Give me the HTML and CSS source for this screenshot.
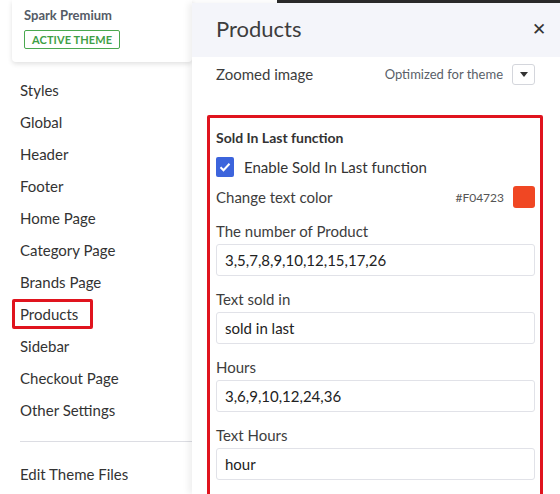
FILE: index.html
```html
<!DOCTYPE html>
<html>
<head>
<meta charset="utf-8">
<link rel="stylesheet" href="styles.css">
</head>
<body>
<div class="page">
  <aside class="sidebar">
    <div class="theme-card">
      <div class="theme-name">Spark Premium</div>
      <span class="badge">ACTIVE THEME</span>
    </div>
    <nav class="nav">
      <a class="nav-item">Styles</a>
      <a class="nav-item">Global</a>
      <a class="nav-item">Header</a>
      <a class="nav-item">Footer</a>
      <a class="nav-item">Home Page</a>
      <a class="nav-item">Category Page</a>
      <a class="nav-item">Brands Page</a>
      <a class="nav-item active">Products</a>
      <a class="nav-item">Sidebar</a>
      <a class="nav-item">Checkout Page</a>
      <a class="nav-item">Other Settings</a>
    </nav>
    <div class="divider"></div>
    <a class="nav-item">Edit Theme Files</a>
  </aside>
  <section class="panel">
    <header class="panel-head">
      <h1 class="panel-title">Products</h1>
      <span class="close">&#x2715;</span>
    </header>
    <div class="panel-body">
      <div class="row">
        <span class="label">Zoomed image</span>
        <div class="row-right">
          <span class="muted">Optimized for theme</span>
          <span class="select"><svg width="8" height="5" viewBox="0 0 8 5"><path d="M0 0h8L4 5z" fill="#333"/></svg></span>
        </div>
      </div>
      <div class="highlight">
        <div class="section-title">Sold In Last function</div>
        <label class="check-row">
          <span class="checkbox"><svg width="12" height="10" viewBox="0 0 12 10"><path d="M1.5 5.2l3 3L10.5 1.8" fill="none" stroke="#fff" stroke-width="2"/></svg></span>
          <span class="check-label">Enable Sold In Last function</span>
        </label>
        <div class="row color-row">
          <span class="label">Change text color</span>
          <div class="row-right">
            <span class="hex">#F04723</span>
            <span class="swatch"></span>
          </div>
        </div>
        <div class="field">
          <div class="label">The number of Product</div>
          <div class="input">3,5,7,8,9,10,12,15,17,26</div>
        </div>
        <div class="field">
          <div class="label">Text sold in</div>
          <div class="input">sold in last</div>
        </div>
        <div class="field">
          <div class="label">Hours</div>
          <div class="input">3,6,9,10,12,24,36</div>
        </div>
        <div class="field">
          <div class="label">Text Hours</div>
          <div class="input">hour</div>
        </div>
      </div>
    </div>
  </section>
</div>
</body>
</html>
```

FILE: styles.css
```css
* { box-sizing: border-box; }
html, body { margin: 0; padding: 0; }
body {
  width: 560px;
  height: 494px;
  overflow: hidden;
  font-family: "Lato", "Source Sans Pro", sans-serif;
  color: #333;
  background: #fff;
}
.page {
  display: flex;
  height: 494px;
  background: linear-gradient(to right, #fff 0, #fff 277px, #2b2b2b 277px) top / 100% 3px no-repeat, #fff;
}
.sidebar {
  width: 192px;
  flex: none;
  padding-left: 12px;
  display: flex;
  flex-direction: column;
}
.theme-card {
  width: 180px;
  height: 62px;
  padding: 7px 0 0 12px;
  border-radius: 0 0 4px 4px;
  box-shadow: 0 2px 5px rgba(0,0,0,0.12);
  background: #fff;
}
.theme-name {
  font-size: 13px;
  font-weight: 700;
  color: #555b66;
  line-height: 16px;
}
.badge {
  display: inline-block;
  margin-top: 7px;
  height: 19px;
  line-height: 17px;
  padding: 0 7px;
  border: 1px solid #4aa84f;
  border-radius: 2px;
  color: #3f9f46;
  font-size: 11px;
  font-weight: 700;
  letter-spacing: 0.1px;
}
.nav {
  margin-top: 12px;
  display: flex;
  flex-direction: column;
}
.nav-item {
  display: block;
  height: 32px;
  line-height: 32px;
  padding-left: 8px;
  font-size: 15px;
  color: #333;
}
.nav-item.active {
  width: 81px;
  height: 30px;
  line-height: 25px;
  margin: 1px 0;
  border: 3px solid #e0141e;
  border-radius: 2px;
  padding-left: 5px;
}
.divider {
  margin: 15px 0 16px 8px;
  height: 1px;
  background: #dcdde3;
}
.panel {
  flex: 1;
  margin-top: 3px;
  display: flex;
  flex-direction: column;
  background: #fff;
  box-shadow: -4px 0 6px rgba(0,0,0,0.06);
}
.panel-head {
  height: 54px;
  flex: none;
  background: #f4f5fa;
  display: flex;
  align-items: center;
  justify-content: space-between;
  padding: 0 14px 4px 24px;
}
.panel-title {
  margin: 0;
  font-size: 22px;
  font-weight: 400;
  color: #3d3d3d;
}
.close {
  font-size: 17px;
  color: #333;
}
.panel-body {
  padding: 5px 0 0 15px;
}
.row {
  display: flex;
  align-items: center;
  justify-content: space-between;
}
.panel-body > .row {
  height: 24px;
  padding: 0 25px 0 9px;
}
.row-right {
  display: flex;
  align-items: center;
  gap: 9px;
}
.label {
  font-size: 15px;
  color: #3d3d3d;
}
.muted {
  font-size: 13px;
  color: #5a5f69;
}
.select {
  width: 23px;
  height: 21px;
  border: 1px solid #d4d6dc;
  border-radius: 3px;
  display: flex;
  align-items: center;
  justify-content: center;
}
.highlight {
  margin-top: 29px;
  width: 336px;
  border: 3px solid #e0141e;
  border-radius: 2px;
  padding: 10px 5px 20px 6px;
}
.section-title {
  font-size: 14px;
  font-weight: 700;
  color: #333;
  line-height: 20px;
}
.check-row {
  display: flex;
  align-items: center;
  gap: 10px;
  margin-top: 9px;
  height: 20px;
}
.checkbox {
  width: 18px;
  height: 20px;
  border-radius: 2px;
  background: #3c64dc;
  display: flex;
  align-items: center;
  justify-content: center;
}
.check-label {
  font-size: 15px;
  color: #333;
}
.color-row {
  margin-top: 9px;
  height: 22px;
}
.hex {
  font-size: 12px;
  color: #555;
}
.swatch {
  width: 22px;
  height: 22px;
  border-radius: 3px;
  background: #f04723;
}
.field {
  margin-top: 13px;
}
.field .label {
  line-height: 20px;
  margin-bottom: 3px;
}
.input {
  height: 32px;
  border: 1px solid #e1e2e8;
  border-radius: 3px;
  padding-left: 8px;
  line-height: 30px;
  font-size: 15px;
  color: #222;
}
.field + .field { margin-top: 13px; }
```
